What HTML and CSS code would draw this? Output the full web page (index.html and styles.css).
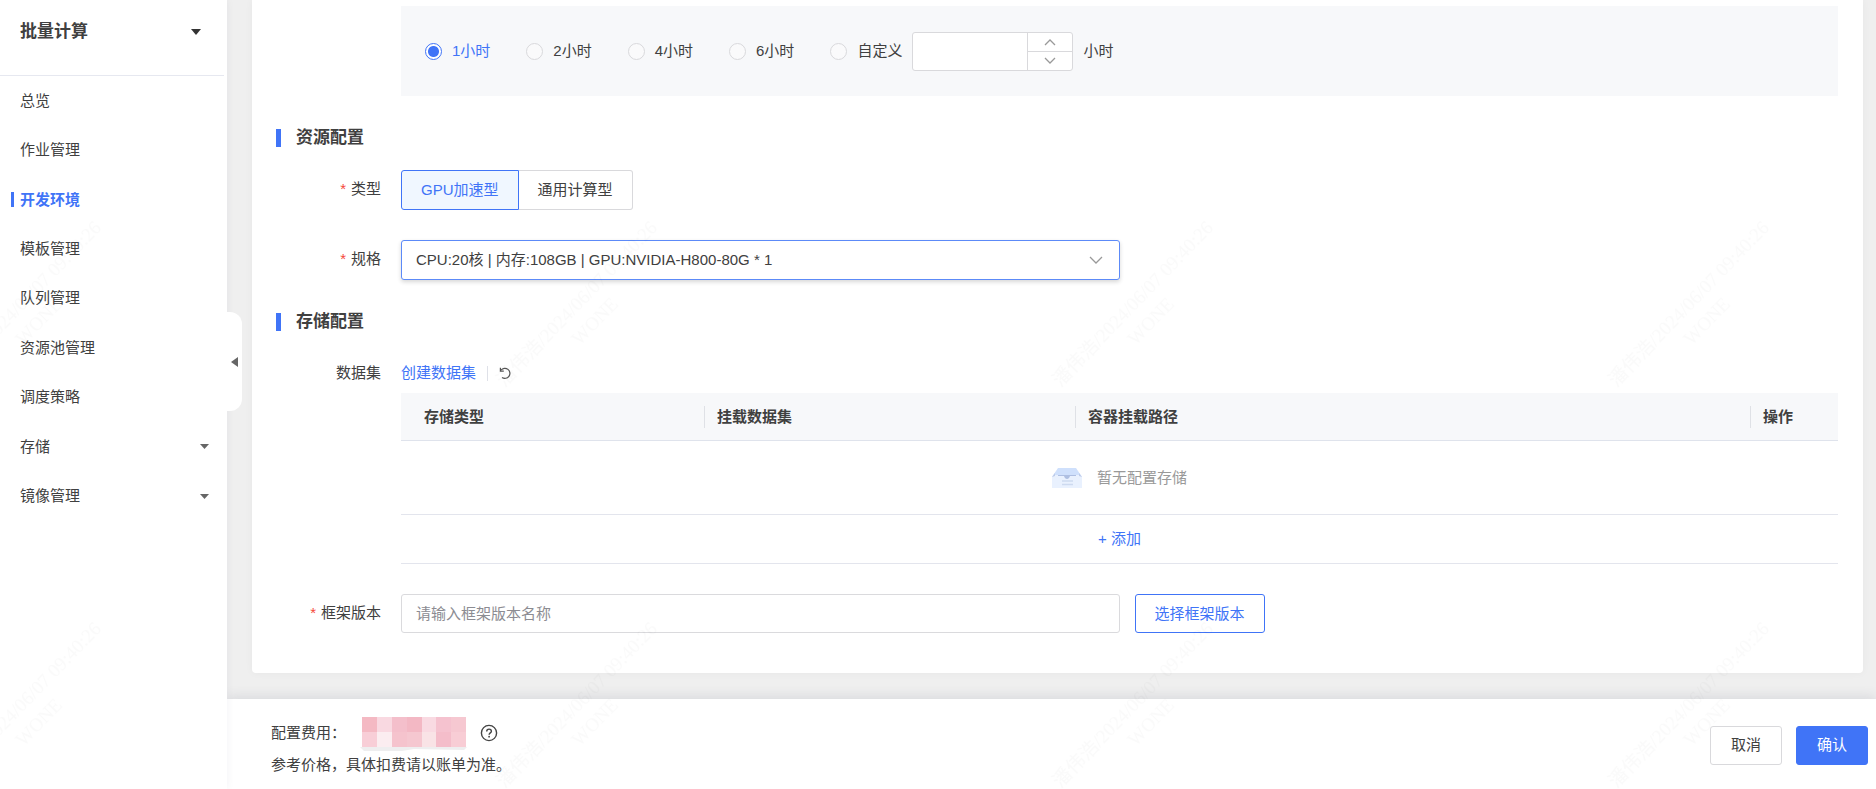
FILE: index.html
```html
<!DOCTYPE html>
<html lang="zh-CN">
<head>
<meta charset="utf-8">
<title>批量计算 - 开发环境</title>
<meta name="viewport" content="width=device-width, initial-scale=1">
<link rel="stylesheet" href="styles.css">
</head>
<body>
<div class="app">
  <aside class="sidebar">
    <button class="product" type="button">
      <span>批量计算</span>
      <svg width="10" height="6" viewBox="0 0 10 6" aria-hidden="true"><path d="M0 0h10L5 6z" fill="#333"/></svg>
    </button>
    <nav class="menu">
      <a class="menu-item" href="#">总览</a>
      <a class="menu-item" href="#">作业管理</a>
      <a class="menu-item active" href="#">开发环境</a>
      <a class="menu-item" href="#">模板管理</a>
      <a class="menu-item" href="#">队列管理</a>
      <a class="menu-item" href="#">资源池管理</a>
      <a class="menu-item" href="#">调度策略</a>
      <a class="menu-item" href="#">存储<svg width="9" height="5" viewBox="0 0 9 5" aria-hidden="true"><path d="M0 0h9L4.500 5z" fill="#666"/></svg></a>
      <a class="menu-item" href="#">镜像管理<svg width="9" height="5" viewBox="0 0 9 5" aria-hidden="true"><path d="M0 0h9L4.500 5z" fill="#666"/></svg></a>
    </nav>
    <button class="collapse" type="button" aria-label="收起菜单">
      <svg width="7" height="10" viewBox="0 0 7 10" aria-hidden="true"><path d="M7 0v10L0 5z" fill="#666"/></svg>
    </button>
  </aside>

  <div class="main">
    <main class="card">
      <div class="duration">
        <label class="radio"><input type="radio" name="duration" checked><span>1小时</span></label>
        <label class="radio"><input type="radio" name="duration"><span>2小时</span></label>
        <label class="radio"><input type="radio" name="duration"><span>4小时</span></label>
        <label class="radio"><input type="radio" name="duration"><span>6小时</span></label>
        <div class="custom">
          <label class="radio"><input type="radio" name="duration"><span>自定义</span></label>
          <div class="stepper">
            <input type="text" aria-label="自定义小时数">
            <div class="stepper-buttons">
              <button type="button" aria-label="增加"><svg width="12" height="8" viewBox="0 0 12 8"><path d="M1 7l5-5 5 5"/></svg></button>
              <button type="button" aria-label="减少"><svg width="12" height="8" viewBox="0 0 12 8"><path d="M1 1l5 5 5-5"/></svg></button>
            </div>
          </div>
          <span class="unit">小时</span>
        </div>
      </div>

      <h2 class="section-title">资源配置</h2>
      <div class="field">
        <span class="label required" id="type-label">类型</span>
        <div class="segmented" role="group" aria-labelledby="type-label">
          <button class="segment selected" type="button">GPU加速型</button>
          <button class="segment" type="button">通用计算型</button>
        </div>
      </div>
      <div class="field spaced">
        <label class="label required" for="spec">规格</label>
        <div class="select">
          <select id="spec"><option>CPU:20核 | 内存:108GB | GPU:NVIDIA-H800-80G * 1</option></select>
          <svg width="14" height="9" viewBox="0 0 14 9" aria-hidden="true"><path d="M1 1l6 6 6-6"/></svg>
        </div>
      </div>

      <h2 class="section-title">存储配置</h2>
      <div class="field">
        <span class="label">数据集</span>
        <div>
          <div class="dataset-tools">
            <a href="#">创建数据集</a>
            <span class="divider"></span>
            <button class="refresh" type="button" aria-label="刷新">
              <svg width="13" height="13" viewBox="0 0 13 13" aria-hidden="true"><g fill="none" stroke="#555" stroke-width="1.200"><path d="M2 3.200A5 5 0 1 1 3 10.400"/><path d="M1.400 0.800v3.400h3.400"/></g></svg>
            </button>
          </div>
          <table class="storage">
            <colgroup><col class="col-type"><col class="col-data"><col><col class="col-action"></colgroup>
            <thead>
              <tr><th><span>存储类型</span></th><th><span>挂载数据集</span></th><th><span>容器挂载路径</span></th><th><span>操作</span></th></tr>
            </thead>
            <tbody>
              <tr class="empty-row"><td colspan="4"><div class="empty">
                <svg width="30" height="20" viewBox="0 0 30 20" aria-hidden="true">
                  <path d="M6 0h18l6 9H0z" fill="#cfe0fc"/>
                  <path d="M0 8l2-1h26l2 1v12H0z" fill="#e9f1fe"/>
                  <path d="M0 9l3-4v3zM30 9l-3-4v3z" fill="#bdcbe9"/>
                  <path d="M6 7h18v1H18c-1 4-5 4-6 0H6z" fill="#aebfe2"/>
                  <path d="M10 13h11M10 16.500h11" stroke="#cddaf0" stroke-width="1.500"/>
                </svg>
                <span>暂无配置存储</span>
              </div></td></tr>
              <tr class="add-row"><td colspan="4"><button class="add" type="button">+ 添加</button></td></tr>
            </tbody>
          </table>
        </div>
      </div>
      <div class="field spaced">
        <label class="label required" for="framework">框架版本</label>
        <div class="framework">
          <input id="framework" type="text" placeholder="请输入框架版本名称">
          <button class="button outline" type="button">选择框架版本</button>
        </div>
      </div>
    </main>

    <footer class="footer">
      <div class="cost">
        <div class="cost-line">
          <span>配置费用：</span>
          <svg class="price" width="110" height="34" viewBox="0 0 110 34" role="img" aria-label="费用">
            <path d="M0 30h107l-3 3-50-1-18 3H5z" fill="#eeeeef"/>
            <g shape-rendering="crispEdges">
              <path d="M2 0h15v15H2z" fill="#f4b9c3"/><path d="M17 0h15v15H17z" fill="#f9d9e1"/>
              <path d="M32 0h15v15H32z" fill="#f4bfcb"/><path d="M47 0h15v15H47z" fill="#f3b8c4"/>
              <path d="M62 0h14v15H62z" fill="#f9dae2"/><path d="M76 0h15v15H76z" fill="#f5c2cf"/>
              <path d="M91 0h15v15H91z" fill="#f6c8d1"/>
              <path d="M2 15h15v15H2z" fill="#f8ced7"/><path d="M17 15h15v15H17z" fill="#fbedf0"/>
              <path d="M32 15h15v15H32z" fill="#f5c3cd"/><path d="M47 15h15v15H47z" fill="#f5c7d0"/>
              <path d="M62 15h14v15H62z" fill="#f9e3e6"/><path d="M76 15h15v15H76z" fill="#f4bdca"/>
              <path d="M91 15h15v15H91z" fill="#f8cdd5"/>
            </g>
          </svg>
          <svg width="18" height="18" viewBox="0 0 18 18" role="img" aria-label="帮助"><g fill="none" stroke="#444" stroke-width="1.400"><circle cx="9" cy="9" r="7.600"/><path d="M6.700 7.400c0-3 4.700-3 4.700-.2 0 1.700-2.300 1.700-2.300 3.500"/></g><circle cx="9.100" cy="12.700" r="0.900" fill="#444"/></svg>
        </div>
        <p class="cost-note">参考价格，具体扣费请以账单为准。</p>
      </div>
      <div class="actions">
        <button class="button" type="button">取消</button>
        <button class="button primary" type="button">确认</button>
      </div>
    </footer>
  </div>
</div>
<svg class="watermark" aria-hidden="true">
  <defs>
    <pattern id="mark" x="-257" y="104" width="556" height="401" patternUnits="userSpaceOnUse">
      <g transform="translate(278 200) rotate(-46)" text-anchor="middle">
        <text y="6">潘伟浩/2024/06/07 09:40:26</text>
        <text y="31">WONE</text>
      </g>
    </pattern>
  </defs>
  <rect width="100%" height="100%" fill="url(#mark)"/>
</svg>
</body>
</html>
```

FILE: styles.css
```css
* {
  box-sizing: border-box;
}

body {
  margin: 0;
  background: #efefef;
  color: #404040;
  font: 15px/20px "Liberation Sans", "Noto Sans CJK SC", sans-serif;
}

button,
input,
select {
  font: inherit;
  color: inherit;
  margin: 0;
}

button {
  padding: 0;
  border: 0;
  background: none;
  cursor: pointer;
}

a {
  color: #4074f7;
  text-decoration: none;
}

.app {
  display: flex;
  min-height: 100vh;
}

.sidebar {
  position: relative;
  z-index: 1;
  flex: 0 0 227px;
  background: #fff;
  box-shadow: 0 0 8px rgba(30, 40, 90, 0.06);
}

.product {
  display: flex;
  align-items: center;
  justify-content: space-between;
  width: 224px;
  height: 76px;
  padding: 0 23px 11px 20px;
  border-bottom: 1px solid #e6e8f0;
  font-size: 17px;
  font-weight: 700;
}

.menu {
  display: grid;
  grid-auto-rows: 1fr;
  height: 445px;
}

.menu-item {
  display: flex;
  align-items: center;
  justify-content: space-between;
  padding: 0 18px 0 20px;
  color: #404040;
}

.menu-item.active {
  justify-content: flex-start;
  gap: 6px;
  padding-left: 11px;
  color: #4074f7;
  font-weight: 700;
}

.menu-item.active::before {
  content: "";
  width: 3px;
  height: 15px;
  background: #4074f7;
}

.collapse {
  position: absolute;
  left: 100%;
  top: 312px;
  display: flex;
  align-items: center;
  justify-content: center;
  width: 15px;
  height: 99px;
  border-radius: 0 12px 12px 0;
  background: #fff;
}

.main {
  display: flex;
  flex: 1;
  flex-direction: column;
  justify-content: space-between;
  min-width: 0;
}

.card {
  margin: 0 13px 25px 25px;
  padding: 6px 25px 40px 24px;
  border-radius: 0 0 4px 4px;
  background: #fff;
  box-shadow: 0 0 8px rgba(0, 0, 0, 0.04);
}

.duration {
  display: flex;
  align-items: center;
  gap: 36px;
  height: 90px;
  margin-left: 125px;
  padding: 0 24px;
  background: #f7f8fa;
}

.radio {
  display: flex;
  align-items: center;
  gap: 10px;
}

.radio input {
  appearance: none;
  width: 17px;
  height: 17px;
  border: 1px solid #d9d9dc;
  border-radius: 50%;
  background: #fafafb;
}

.radio input:checked {
  border-color: #4074f7;
  background: radial-gradient(circle, #4074f7 5px, #fff 6px);
}

.radio input:checked + span {
  color: #4074f7;
}

.custom {
  display: flex;
  align-items: center;
  gap: 10px;
}

.stepper {
  display: flex;
  width: 161px;
  height: 39px;
  border: 1px solid #d9d9dc;
  border-radius: 3px;
  background: #fff;
}

.stepper input {
  flex: 1;
  min-width: 0;
  padding: 0 12px;
  border: 0;
  background: none;
}

.stepper-buttons {
  display: grid;
  grid-template-rows: 1fr 1fr;
  width: 45px;
  border-left: 1px solid #d9d9dc;
}

.stepper-buttons button {
  display: grid;
  place-items: center;
}

.stepper-buttons button + button {
  border-top: 1px solid #d9d9dc;
}

.stepper-buttons path,
.select path {
  fill: none;
  stroke: #999;
  stroke-width: 1.3;
}

.section-title {
  display: flex;
  align-items: center;
  gap: 15px;
  margin: 30px 0 20px;
  font-size: 17px;
  line-height: 24px;
}

.section-title::before {
  content: "";
  width: 5px;
  height: 18px;
  background: #4074f7;
}

.field {
  display: grid;
  grid-template-columns: 105px minmax(0, 1fr);
  gap: 20px;
}

.spaced {
  margin-top: 30px;
}

.label {
  line-height: 38px;
  text-align: right;
}

.required::before {
  content: "*";
  margin-right: 5px;
  color: #f5483b;
}

.segmented {
  display: flex;
  height: 40px;
}

.segment {
  padding: 0 19px;
  border: 1px solid #d9d9dc;
  border-left: 0;
  border-radius: 0 3px 3px 0;
  background: #fff;
}

.segment.selected {
  border: 1px solid #4074f7;
  border-radius: 3px 0 0 3px;
  background: #f0f7ff;
  color: #4074f7;
}

.select {
  display: grid;
  align-items: center;
  width: 50%;
  min-width: 400px;
}

.select > * {
  grid-area: 1 / 1;
}

.select select {
  appearance: none;
  width: 100%;
  height: 40px;
  padding: 0 48px 0 14px;
  border: 1px solid #5c8af8;
  border-radius: 3px;
  background: #fff;
  box-shadow: 0 2px 4px rgba(0, 0, 0, 0.16);
}

.select svg {
  justify-self: end;
  margin-right: 17px;
  pointer-events: none;
}

.dataset-tools {
  display: flex;
  align-items: center;
  gap: 11px;
  height: 38px;
  margin-bottom: 1px;
}

.divider {
  width: 1px;
  height: 15px;
  background: #dfe1e8;
}

.refresh {
  display: grid;
  place-items: center;
}

.storage {
  width: 100%;
  table-layout: fixed;
  border-collapse: separate;
  border-spacing: 0;
}

.col-type {
  width: 303px;
}

.col-data {
  width: 371px;
}

.col-action {
  width: 88px;
}

.storage th {
  height: 48px;
  padding: 0;
  border-bottom: 1px solid #dfe3ec;
  background: #f7f8fa;
  text-align: left;
}

.storage th span {
  display: block;
  padding-left: 12px;
  border-left: 1px solid #dfe1e6;
  line-height: 22px;
}

.storage th:first-child span {
  padding-left: 23px;
  border-left: 0;
}

.storage td {
  padding: 0;
  border-bottom: 1px solid #e3e5ed;
  text-align: center;
}

.empty-row td {
  height: 74px;
}

.add-row td {
  height: 49px;
}

.empty {
  display: flex;
  align-items: center;
  justify-content: center;
  gap: 15px;
  color: #999;
}

.add {
  color: #4074f7;
}

.framework {
  display: flex;
  gap: 15px;
}

.framework input {
  flex: 0 0 50%;
  height: 39px;
  padding: 0 14px;
  border: 1px solid #dadadd;
  border-radius: 3px;
  background: #fff;
}

.framework input::placeholder {
  color: #8c8c92;
}

.button {
  height: 39px;
  padding: 0 20px;
  border: 1px solid #d9d9dc;
  border-radius: 3px;
  background: #fff;
}

.button.outline {
  padding: 0 19px;
  border-color: #4074f7;
  color: #4074f7;
}

.button.primary {
  border-color: #4074f7;
  background: #4074f7;
  color: #fff;
}

.footer {
  display: flex;
  align-items: center;
  justify-content: space-between;
  min-height: 90px;
  padding: 0 8px 0 44px;
  background: #fff;
  box-shadow: 0 -2px 12px rgba(40, 50, 80, 0.12);
}

.cost {
  display: grid;
  gap: 6px;
  padding-top: 7px;
}

.cost-line {
  display: flex;
  align-items: center;
  gap: 12px;
  height: 28px;
}

.price {
  margin: 2px -2px 0 2px;
}

.cost-note {
  margin: 0;
  line-height: 24px;
}

.actions {
  display: flex;
  gap: 14px;
  padding-top: 2px;
}

.watermark {
  position: fixed;
  inset: 0;
  z-index: 2;
  width: 100%;
  height: 100%;
  pointer-events: none;
}

.watermark text {
  font: 19px "Liberation Serif", "Noto Sans CJK SC", serif;
  fill: #000;
  fill-opacity: 0.02;
}
```
